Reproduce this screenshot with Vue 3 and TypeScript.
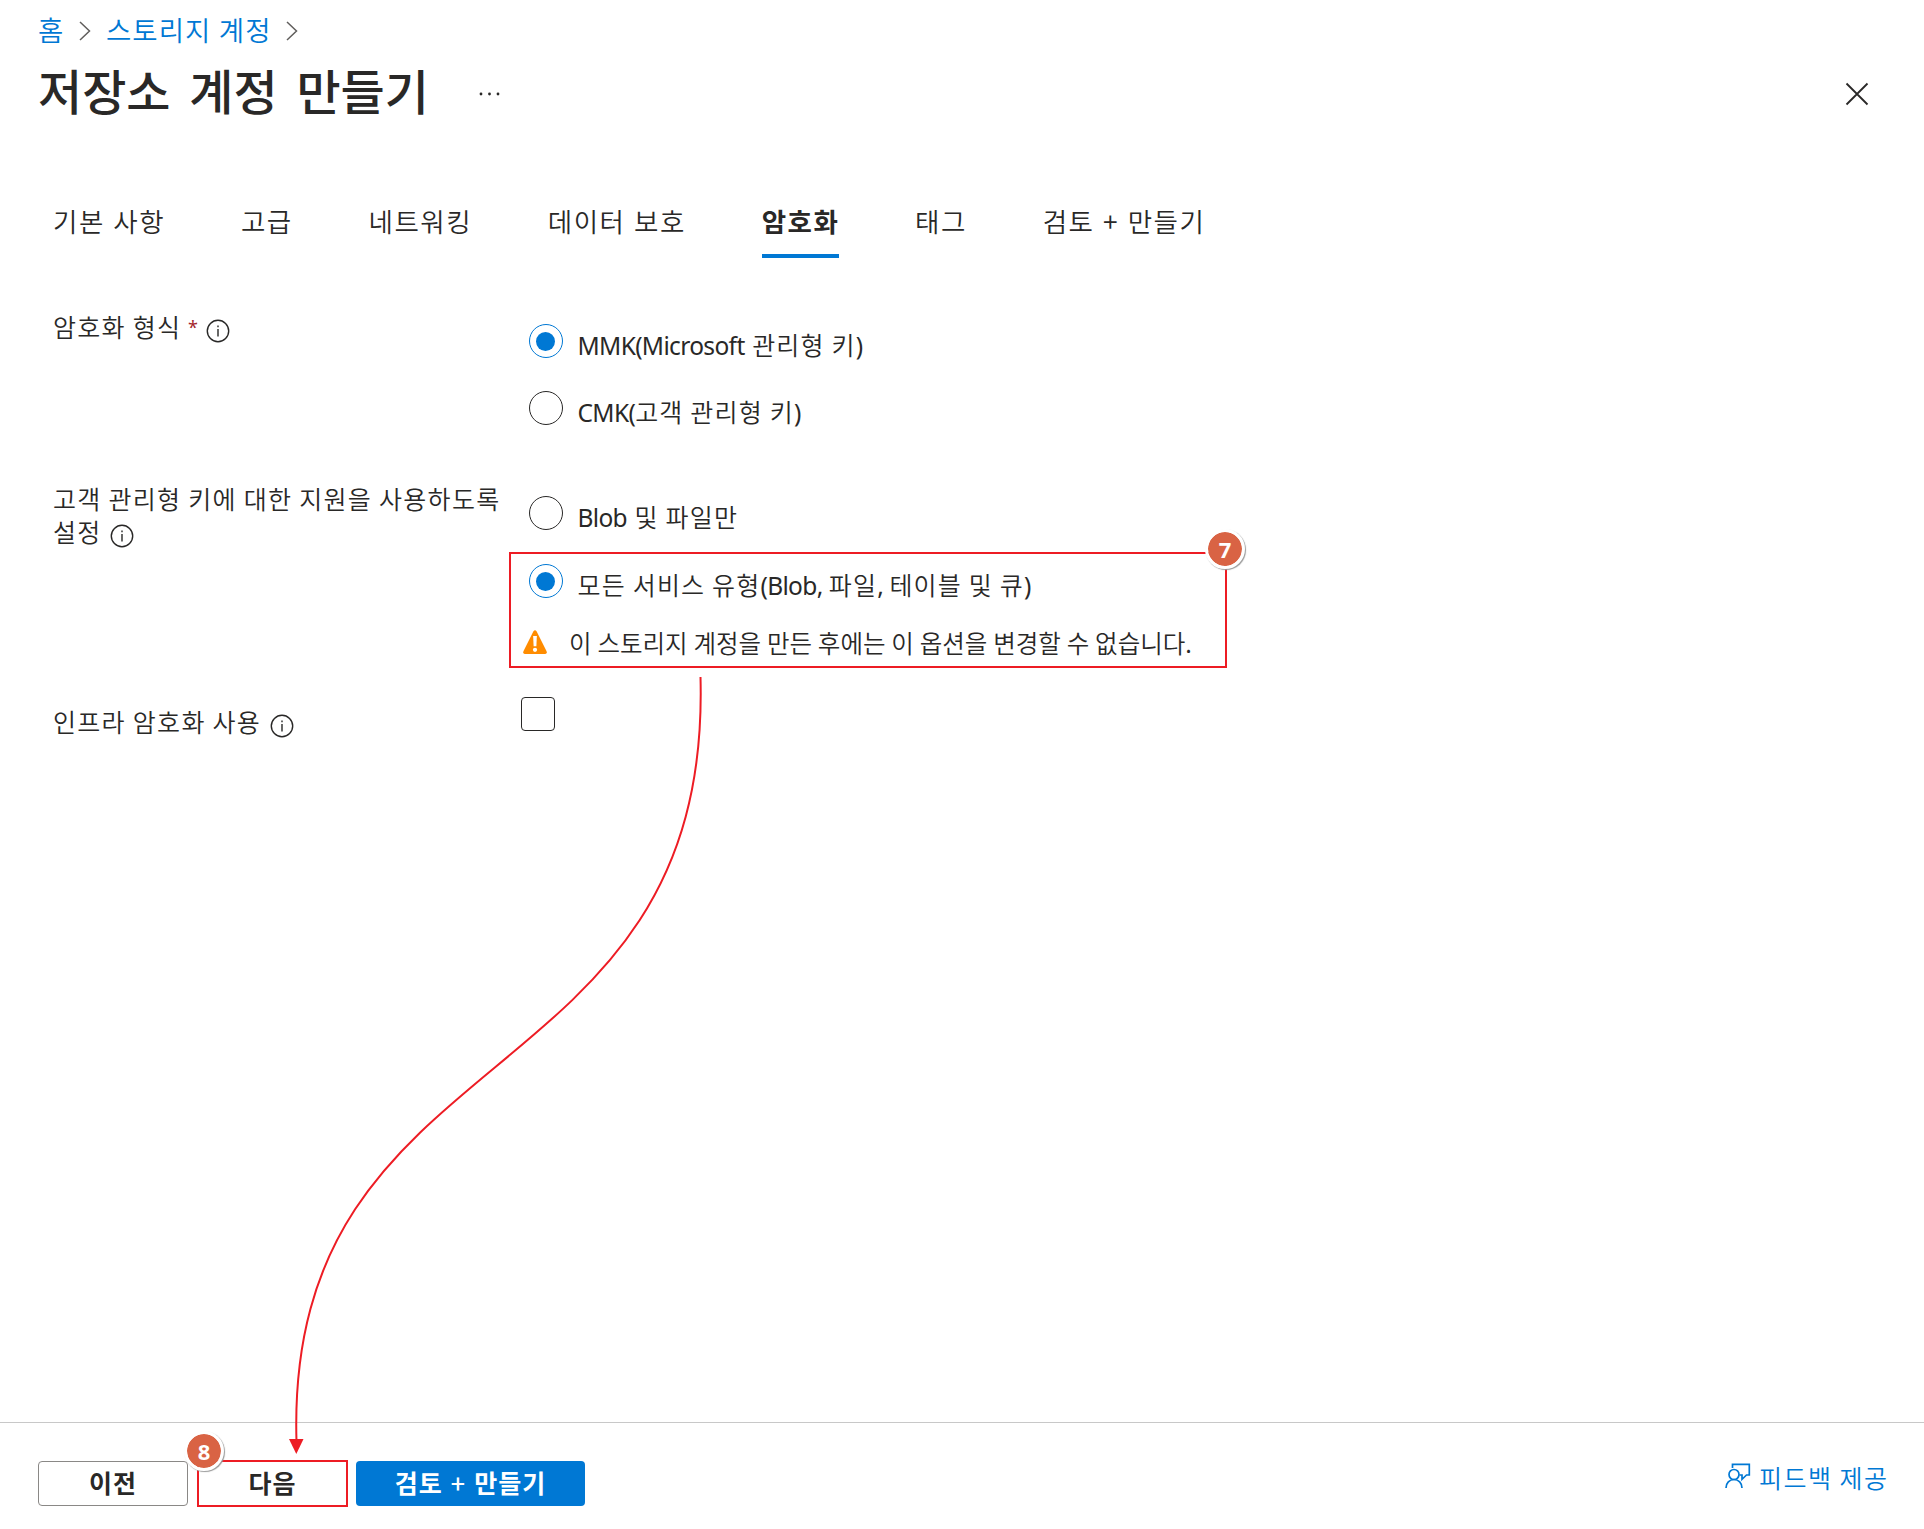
<script setup lang="ts">
interface Tab {
  label: string
  active?: boolean
}

const tabs: Tab[] = [
  { label: '기본 사항' },
  { label: '고급' },
  { label: '네트워킹' },
  { label: '데이터 보호' },
  { label: '암호화', active: true },
  { label: '태그' },
  { label: '검토 + 만들기' },
]
</script>

<template>
  <div class="page">
    <header class="header">
      <nav class="crumbs">
        <a>홈</a>
        <svg class="chev" width="12" height="20" viewBox="0 0 12 20"><path d="M1 1l9.500 9L1 19" /></svg>
        <a>스토리지 계정</a>
        <svg class="chev" width="12" height="20" viewBox="0 0 12 20"><path d="M1 1l9.500 9L1 19" /></svg>
      </nav>
      <div class="title-row">
        <h1>저장소 계정 만들기</h1>
        <svg class="dots" width="22" height="4" viewBox="0 0 22 4">
          <circle cx="2" cy="2" r="1.400" /><circle cx="10.500" cy="2" r="1.400" /><circle cx="19" cy="2" r="1.400" />
        </svg>
        <svg class="close" width="24" height="24" viewBox="0 0 24 24"><path d="M1.500 1.500l21 21M22.500 1.500l-21 21" /></svg>
      </div>
    </header>

    <div class="tabs">
      <div v-for="tab in tabs" :key="tab.label" class="tab" :class="{ active: tab.active }">{{ tab.label }}</div>
    </div>

    <main class="form">
      <section class="row type-row">
        <div class="label">암호화 형식<span class="req">*</span><svg class="info" width="24" height="24" viewBox="0 0 24 24"><circle cx="12" cy="12" r="10.700" /><path d="M12 10v7.500M12 6.500v1.800" /></svg></div>
        <div class="options">
          <div class="option">
            <span class="radio on"></span>
            <span class="opt-text"><span class="latin">MMK(Microsoft </span>관리형 키<span class="latin">)</span></span>
          </div>
          <div class="option">
            <span class="radio"></span>
            <span class="opt-text"><span class="latin">CMK(</span>고객 관리형 키<span class="latin">)</span></span>
          </div>
        </div>
      </section>

      <section class="row support-row">
        <div class="label">고객 관리형 키에 대한 지원을 사용하도록<br />설정<svg class="info" width="24" height="24" viewBox="0 0 24 24"><circle cx="12" cy="12" r="10.700" /><path d="M12 10v7.500M12 6.500v1.800" /></svg></div>
        <div class="options">
          <div class="option">
            <span class="radio"></span>
            <span class="opt-text"><span class="latin">Blob </span>및 파일만</span>
          </div>
          <div class="marked">
            <div class="option">
              <span class="radio on"></span>
              <span class="opt-text">모든 서비스 유형<span class="latin list">(Blob, </span>파일<span class="latin list">, </span>테이블 및 큐<span class="latin">)</span></span>
            </div>
            <div class="warning">
              <svg width="24" height="24" viewBox="0 0 26 26">
                <path d="M11.200 1.500Q13 -.8 14.800 1.500L25.500 23Q26.500 26 24 26H2Q-.5 26 .5 23Z" fill="#ff8c00" />
                <path d="M11 6.500h4l-.5 11h-3z" fill="#fff" /><circle cx="13" cy="21.500" r="2.300" fill="#fff" />
              </svg>
              <span>이 스토리지 계정을 만든 후에는 이 옵션을 변경할 수 없습니다.</span>
            </div>
            <span class="badge seven">7</span>
          </div>
        </div>
      </section>

      <section class="row infra-row">
        <div class="label">인프라 암호화 사용<svg class="info" width="24" height="24" viewBox="0 0 24 24"><circle cx="12" cy="12" r="10.700" /><path d="M12 10v7.500M12 6.500v1.800" /></svg></div>
        <span class="checkbox"></span>
      </section>
    </main>

    <footer class="footer">
      <button class="btn prev">이전</button>
      <button class="btn next">다음<span class="badge eight">8</span></button>
      <button class="btn primary">검토 <span class="plus">+</span> 만들기</button>
      <a class="feedback">
        <svg width="26" height="26" viewBox="0 0 26 26">
          <path d="M7.500 5V1.300H24.300V12H21.500L17 16.300V12H14.500" />
          <circle cx="9" cy="11.500" r="5" />
          <path d="M1 25C1 20 4.500 16.500 9 16.500S17 20 17 25" />
        </svg>
        <span>피드백 제공</span>
      </a>
    </footer>

    <svg class="arrow" width="1924" height="1529" viewBox="0 0 1924 1529">
      <path d="M700.500 677C712 1105 284 1028 296.500 1442" fill="none" stroke="#ed1c24" stroke-width="2" />
      <path d="M289 1439h14.500l-7.200 15z" fill="#ed1c24" />
    </svg>
  </div>
</template>

<style>
body {
  background: #fff;
}
</style>

<style scoped>
.page {
  position: relative;
  display: flex;
  flex-direction: column;
  width: 1924px;
  height: 1529px;
  overflow: hidden;
  box-sizing: border-box;
  color: #292827;
  font-family: 'Noto Sans CJK KR', 'Noto Sans', sans-serif;
  font-size: 25px;
  font-weight: 350;
  letter-spacing: 1.2px;
  white-space: nowrap;
}
.header {
  height: 190px;
  padding: 9px 55px 0 38px;
  box-sizing: border-box;
}
.crumbs {
  display: flex;
  align-items: center;
  height: 40px;
  font-size: 27.5px;
  letter-spacing: 1.1px;
  color: #0078d4;
}
.chev {
  margin: 4px 15px 0 14.500px;
  fill: none;
  stroke: #605e5c;
  stroke-width: 1.500;
}
.title-row {
  display: flex;
  align-items: center;
  height: 80px;
}
h1 {
  margin: 0;
  font-size: 48px;
  font-weight: 500;
  letter-spacing: 0;
  word-spacing: 8px;
}
.dots {
  margin: 10px 0 0 50px;
  fill: #292827;
}
.close {
  margin: 10px 0 0 auto;
  fill: none;
  stroke: #292827;
  stroke-width: 1.800;
}
.tabs {
  display: flex;
  gap: 75.8px;
  height: 68px;
  padding-left: 53px;
  font-size: 26.500px;
  letter-spacing: 1.5px;
  word-spacing: 1.200px;
}
.tab {
  height: 64px;
  line-height: 62px;
}
.tab.active {
  font-weight: 700;
  border-bottom: 4px solid #0078d4;
}
.form {
  flex: 1;
  display: flex;
  flex-direction: column;
  padding-left: 53px;
}
.row {
  display: flex;
}
.label {
  width: 456px;
  line-height: 33px;
  letter-spacing: 1.3px;
}
.req {
  margin-left: 6.500px;
  color: #a4262c;
  font-family: 'Noto Sans', sans-serif;
  font-size: 18px;
  font-weight: 400;
  line-height: 1;
  vertical-align: 3px;
}
.info {
  margin-left: 8.500px;
  vertical-align: -6px;
  fill: none;
  stroke: #292827;
  stroke-width: 1.400;
}
.type-row .info {
  margin-left: 7px;
}
.options {
  flex: 1;
}
.option {
  display: flex;
  align-items: center;
  height: 34px;
  padding-left: 20px;
}
.radio {
  display: flex;
  align-items: center;
  justify-content: center;
  width: 34px;
  height: 34px;
  box-sizing: border-box;
  border: 1.500px solid #292827;
  border-radius: 50%;
}
.radio.on {
  border-color: #0078d4;
}
.radio.on::before {
  content: '';
  width: 19px;
  height: 19px;
  margin-right: 1px;
  border-radius: 50%;
  background: #0078d4;
}
.opt-text {
  margin-left: 14.500px;
  padding-top: 6px;
}
.latin {
  font-family: 'Noto Sans', sans-serif;
  font-size: 24.500px;
  font-weight: 400;
  letter-spacing: -0.650px;
  word-spacing: 1.800px;
  white-space: pre;
}
.latin.list {
  word-spacing: 0.500px;
}
.type-row {
  height: 171px;
  padding-top: 54px;
}
.type-row .options {
  margin-top: 12px;
}
.type-row .option + .option {
  margin-top: 33px;
}
.type-row .label {
  margin-top: -2px;
}
.support-row {
  height: 210px;
}
.support-row .label {
  margin-top: -1px;
}
.support-row .options {
  margin-top: 13px;
}
.marked {
  position: relative;
  width: 718px;
  height: 116px;
  margin-top: 22px;
  box-sizing: border-box;
  border: 2px solid #ed1c24;
}
.marked .option {
  padding: 10px 0 0 18px;
}
.warning {
  display: flex;
  align-items: center;
  margin-top: 25px;
  height: 38px;
  padding-left: 12px;
  font-size: 24.500px;
  letter-spacing: 0;
  word-spacing: 0.400px;
}
.warning span {
  margin-left: 22px;
  padding-top: 1px;
}
.badge {
  position: absolute;
  display: flex;
  align-items: center;
  justify-content: center;
  width: 34px;
  height: 34px;
  border: 3px solid #fff;
  border-radius: 50%;
  background: #d96344;
  background-clip: padding-box;
  box-shadow: 1px 1px 1px #999;
  color: #fff;
  font-family: 'Noto Sans', sans-serif;
  font-size: 22px;
  font-weight: 700;
  line-height: 30px;
  letter-spacing: 0;
}
.seven {
  top: -25px;
  right: -20px;
}
.eight {
  top: -31px;
  left: -15px;
}
.infra-row .label {
  width: 468px;
  margin-top: 12px;
}
.checkbox {
  width: 34px;
  height: 34px;
  margin-top: 4px;
  box-sizing: border-box;
  border: 1.500px solid #292827;
  border-radius: 4px;
}
.footer {
  display: flex;
  height: 107px;
  padding: 38px 35.500px 0 38px;
  box-sizing: border-box;
  border-top: 1px solid #c8c8c8;
}
.btn {
  position: relative;
  height: 45px;
  padding: 0 0 3px;
  box-sizing: border-box;
  border: 1px solid #8a8886;
  border-radius: 4px;
  background: #fff;
  color: #292827;
  font: 700 25px 'Noto Sans CJK KR', sans-serif;
  letter-spacing: 1px;
  word-spacing: 1.500px;
}
.prev {
  width: 150px;
}
.next {
  width: 151px;
  height: 47px;
  margin: -1px 8px 0 9px;
  border: 2px solid #ed1c24;
  border-radius: 0;
}
.primary {
  width: 229px;
  border: 0;
  background: #0078d4;
  color: #fff;
}
.plus {
  font-weight: 500;
}
.feedback {
  display: flex;
  align-items: center;
  height: 31px;
  margin-left: auto;
  color: #0078d4;
  letter-spacing: 1.500px;
}
.feedback svg {
  margin: 0 8px 1px 0;
  fill: none;
  stroke: #0078d4;
  stroke-width: 1.700;
}
.arrow {
  position: absolute;
  top: 0;
  left: 0;
  pointer-events: none;
}
</style>
